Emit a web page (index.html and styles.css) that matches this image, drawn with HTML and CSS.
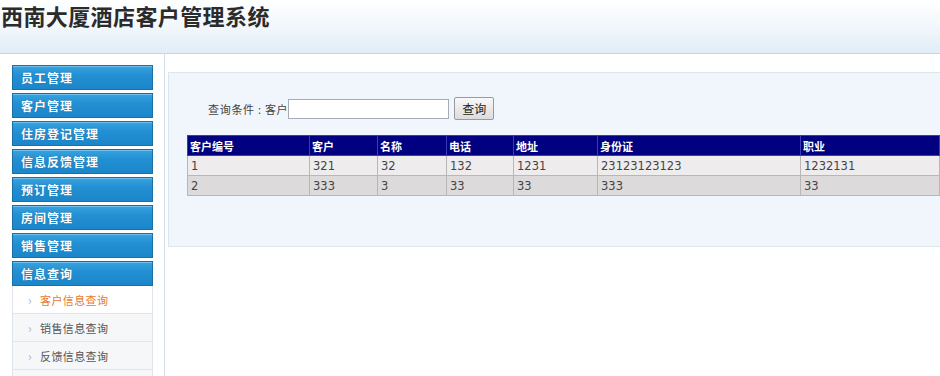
FILE: index.html
```html
<!DOCTYPE html>
<html lang="zh-CN">
<head>
  <meta charset="UTF-8" />
  <meta name="viewport" content="width=device-width, initial-scale=1.0" />
  <title>西南大厦酒店客户管理系统</title>
  <link rel="stylesheet" href="styles.css">
</head>
<body>
  <div class="header">
    <h1 class="title">西南大厦酒店客户管理系统</h1>
  </div>

  <div class="layout">
    <div class="sidebar">
      <div class="menu-item">员工管理</div>
      <div class="menu-item">客户管理</div>
      <div class="menu-item">住房登记管理</div>
      <div class="menu-item">信息反馈管理</div>
      <div class="menu-item">预订管理</div>
      <div class="menu-item">房间管理</div>
      <div class="menu-item">销售管理</div>
      <div class="menu-item">信息查询</div>
      <ul class="submenu">
        <li class="active"><span class="arrow">›</span>客户信息查询</li>
        <li><span class="arrow">›</span>销售信息查询</li>
        <li><span class="arrow">›</span>反馈信息查询</li>
        <li></li>
      </ul>
    </div>

    <div class="main">
      <div class="panel">
        <form class="search">
          <label for="keyword">查询条件 : 客户</label>
          <input type="text" id="keyword" />
          <button type="button">查询</button>
        </form>

        <table class="grid">
          <colgroup>
            <col style="width:122px">
            <col style="width:68px">
            <col style="width:69px">
            <col style="width:67px">
            <col style="width:84px">
            <col style="width:203px">
            <col style="width:139px">
          </colgroup>
          <thead>
            <tr>
              <th>客户编号</th>
              <th>客户</th>
              <th>名称</th>
              <th>电话</th>
              <th>地址</th>
              <th>身份证</th>
              <th>职业</th>
            </tr>
          </thead>
          <tbody>
            <tr>
              <td>1</td>
              <td>321</td>
              <td>32</td>
              <td>132</td>
              <td>1231</td>
              <td>23123123123</td>
              <td>1232131</td>
            </tr>
            <tr class="alt">
              <td>2</td>
              <td>333</td>
              <td>3</td>
              <td>33</td>
              <td>33</td>
              <td>333</td>
              <td>33</td>
            </tr>
          </tbody>
        </table>
      </div>
    </div>
  </div>
</body>
</html>
```

FILE: styles.css
```css
body {
  margin: 0;
  padding: 0;
  background: #fff;
  font-family: "Noto Sans CJK SC", "DejaVu Sans", sans-serif;
  color: #333;
  overflow: hidden;
}

/* 顶部标题栏 */
.header {
  height: 53px;
  background: linear-gradient(to bottom, #ffffff 0%, #f3f8fc 45%, #e2edf7 100%);
  border-bottom: 1px solid #c4d6e5;
}

.title {
  margin: 0;
  padding: 0 0 0 1px;
  font-size: 22px;
  font-weight: 700;
  line-height: 30px;
  color: #2b2b2b;
  letter-spacing: 0.4px;
}

.layout {
  display: flex;
  height: 322px;
  overflow: hidden;
}

/* 左侧菜单 */
.sidebar {
  width: 152px;
  flex: none;
  padding: 11px 0 0 12px;
  border-right: 1px solid #d5dee6;
  display: flex;
  flex-direction: column;
  gap: 3px;
}

.menu-item {
  width: 131px;
  height: 23px;
  padding-left: 8px;
  line-height: 24px;
  font-size: 12px;
  font-weight: 700;
  letter-spacing: 1px;
  color: #fff;
  background: linear-gradient(to bottom, #3aa3e0 0%, #2290d3 40%, #1b86c9 100%);
  border: 1px solid #1a6fa6;
  box-shadow: inset 0 1px 0 #6cc0ef;
  text-shadow: 0 0 1px #1a5f8f;
}

.submenu {
  list-style: none;
  margin: -3px 0 0;
  padding: 0;
  width: 141px;
}

.submenu li {
  height: 27px;
  line-height: 27px;
  font-size: 11px;
  letter-spacing: 0.4px;
  color: #555;
  background: #f6f7f8;
  border: 1px solid #dfe5ea;
  border-top: 0;
  padding-left: 15px;
}

.submenu li.active {
  background: #fff;
  color: #e8782f;
}

.arrow {
  display: inline-block;
  width: 12px;
  color: #aab4bd;
  font-size: 12px;
}

/* 右侧内容 */
.main {
  flex: 1;
  padding: 18px 0 0 3px;
  overflow: hidden;
}

.panel {
  height: 173px;
  background: #f0f6fb;
  border: 1px solid #dbe6ef;
  border-right: 0;
  padding: 0 0 0 18px;
}

.search {
  display: flex;
  align-items: center;
  margin: 23px 0 0 21px;
  height: 25px;
}

.search label {
  font-size: 11px;
  color: #444;
  letter-spacing: 0.7px;
}

.search input {
  width: 157px;
  height: 16px;
  margin: 0;
  padding: 1px;
  border: 1px solid #a5acb5;
  background: #fff;
}

.search button {
  margin-left: 5px;
  width: 40px;
  height: 23px;
  padding: 0;
  font-family: "Noto Sans CJK SC", sans-serif;
  font-size: 12px;
  color: #222;
  background: linear-gradient(to bottom, #f8f8f8, #dcdcdc);
  border: 1px solid #9a9a9a;
  border-radius: 2px;
}

.grid {
  margin-top: 14px;
  border-collapse: collapse;
  table-layout: fixed;
  width: 753px;
  font-size: 12px;
}

.grid th {
  height: 19px;
  padding: 0 2px;
  text-align: left;
  font-size: 11px;
  font-weight: 700;
  color: #fff;
  background: #000080;
  border: 1px solid #3b3bb8;
}

.grid td {
  height: 19px;
  padding: 0 3px;
  font-family: "DejaVu Sans", sans-serif;
  font-size: 11.5px;
  color: #444;
  background: #eeeced;
  border: 1px solid #b8b6b7;
}

.grid tr.alt td {
  background: #dcdadb;
}
```
